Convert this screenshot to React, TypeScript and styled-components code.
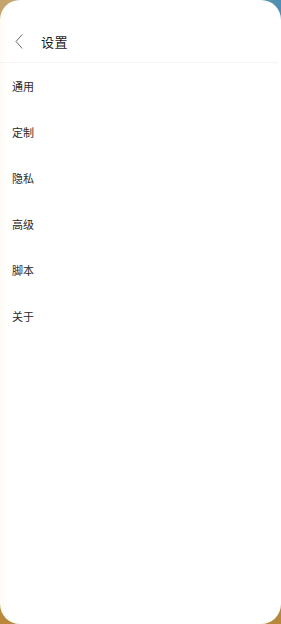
import React from "react";
import styled, { createGlobalStyle } from "styled-components";

const GlobalStyle = createGlobalStyle`
    html, body {
        margin: 0;
        padding: 0;
        height: 100%;
    }
    body {
        font-family: "Noto Sans CJK SC", "Noto Sans", sans-serif;
        background: #c4a46c;
        overflow: hidden;
    }
`;

const Backdrop = styled.div`
    width: 281px;
    height: 624px;
    background:
        linear-gradient(180deg, rgba(184, 135, 58, 0) 50%, #b8873a 100%),
        linear-gradient(90deg, #c4a46c 0%, #d2b98c 55%, #4e8db4 100%);
`;

const Sheet = styled.div`
    width: 281px;
    height: 624px;
    border-radius: 20px;
    background: linear-gradient(90deg, #fdfbf4 0px, #ffffff 8px);
    display: flex;
    flex-direction: column;
    overflow: hidden;
`;

const Header = styled.div`
    height: 63px;
    box-sizing: border-box;
    padding: 20px 0 0 15px;
    display: flex;
    align-items: center;
    gap: 18px;
    border-bottom: 1px solid #f5f4f0;
    margin: 0 3px 0 0;
`;

const BackButton = styled.button`
    border: none;
    background: none;
    padding: 0;
    width: 8px;
    height: 15px;
    display: flex;
    cursor: pointer;
`;

const Title = styled.h1`
    margin: 0;
    font-size: 13px;
    font-weight: 400;
    color: #1a1a1a;
    letter-spacing: 0.5px;
`;

const Menu = styled.ul`
    list-style: none;
    margin: 0;
    padding: 0;
`;

const MenuItem = styled.li`
    height: 46px;
    display: flex;
    align-items: center;
    padding-left: 12px;
    font-size: 11px;
    color: #2a2a2a;
`;

const items = ["通用", "定制", "隐私", "高级", "脚本", "关于"];

export default function App() {
    return <>
        <GlobalStyle />
        <Backdrop>
            <Sheet>
                <Header>
                    <BackButton aria-label="返回">
                        <svg width="8" height="15" viewBox="0 0 8 15" fill="none">
                            <polyline points="7,0.8 1,7.5 7,14.2" stroke="#6a6a6a" strokeWidth="1" strokeLinecap="round" strokeLinejoin="round" />
                        </svg>
                    </BackButton>
                    <Title>设置</Title>
                </Header>
                <Menu>
                    {items.map(name => <MenuItem key={name}>{name}</MenuItem>)}
                </Menu>
            </Sheet>
        </Backdrop>
    </>;
}
